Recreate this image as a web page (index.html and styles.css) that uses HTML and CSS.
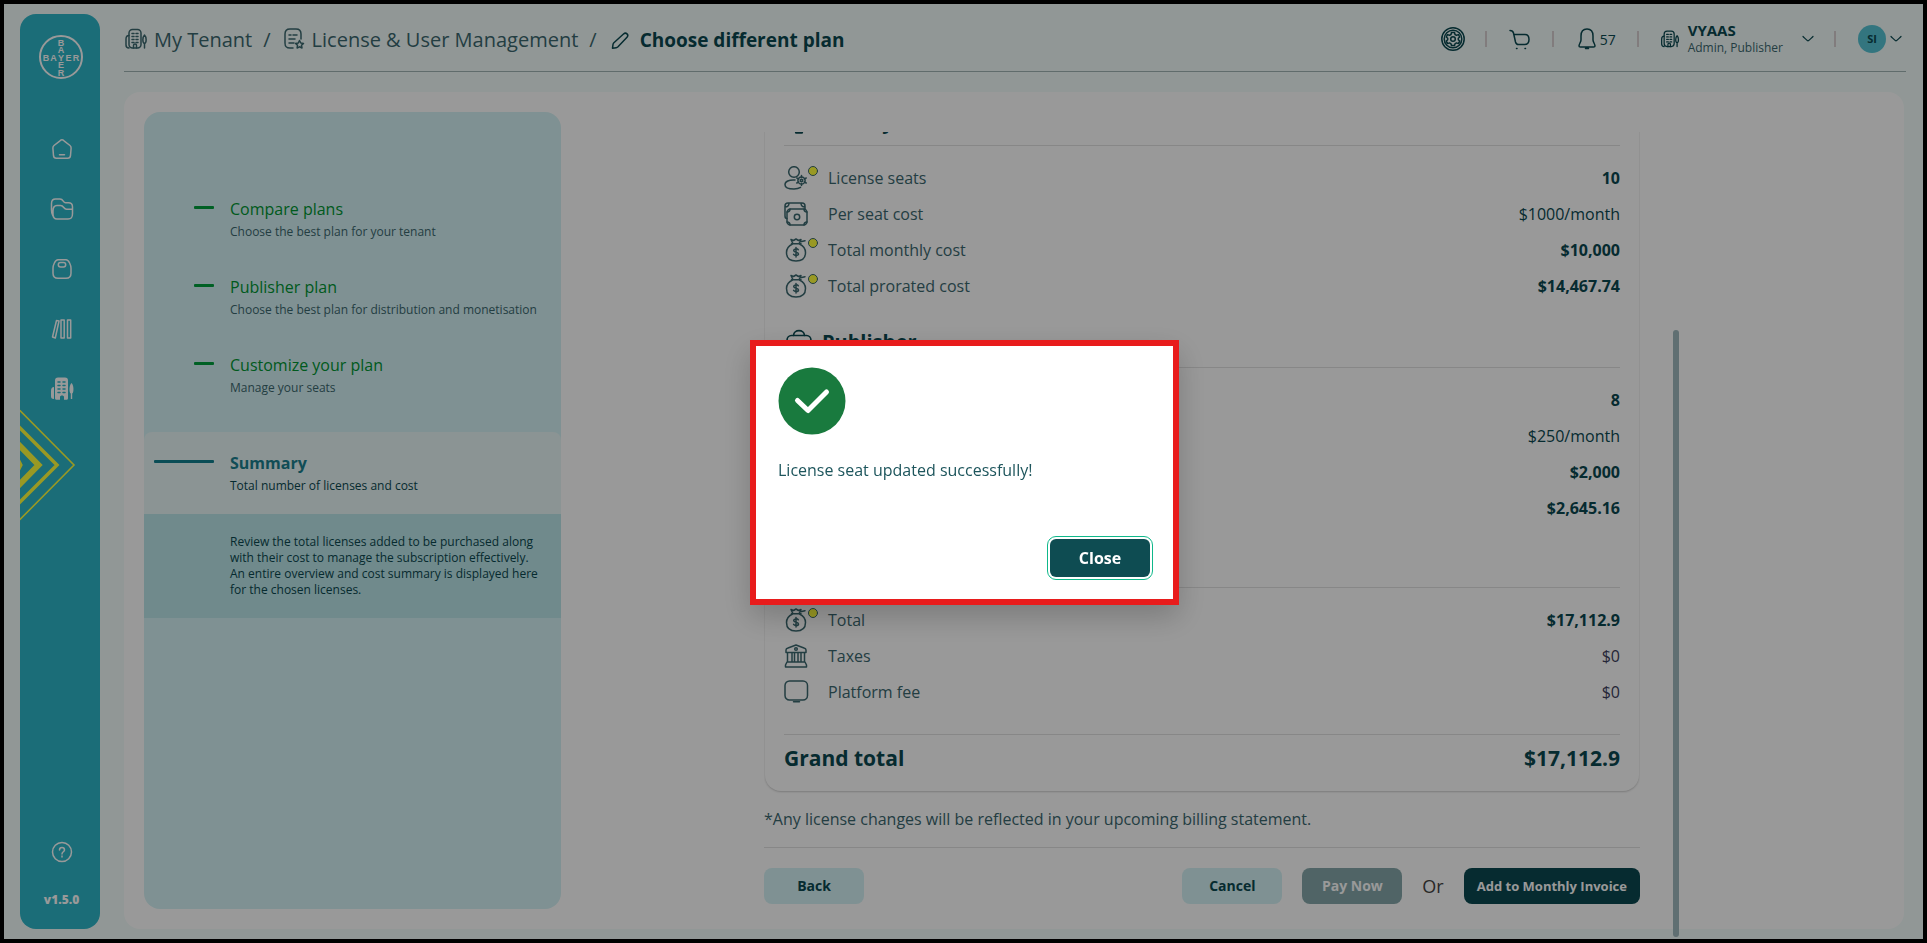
FILE: index.html
```html
<!DOCTYPE html>
<html lang="en">
<head>
<meta charset="utf-8">
<title>Choose different plan</title>
<link rel="stylesheet" href="styles.css">
</head>
<body>
<svg class="defs" aria-hidden="true">
  <symbol id="tenant" viewBox="0 0 24 24">
    <rect x="5" y="2.500" width="12" height="18.500" rx="3.500"/>
    <path d="M5 8.500c-2 0-3 1.500-3 3.500v6c0 2 1 3 3 3M9.500 21v-2.500c0-2 3-2 3 0V21"/>
    <path d="M8 6.500h2M12 6.500h2M8 9.500h2M12 9.500h2M8 12.500h2M12 12.500h2M8 15.500h2M12 15.500h2"/>
    <path d="M20.500 21v-4.500M20.500 8c-2.200 2-2.200 8 0 8.500 2.200-.5 2.200-6.500 0-8.500z"/>
  </symbol>
  <symbol id="bag" viewBox="0 0 34 24">
    <path d="M7.500 5.800h9.500M7 1.500l2 4.300M7 1.500l2.500 1 2.500-1.500 2.500 1.500 2.500-1-2 4.300M16.500 3.700l4.500-1M8.500 6C4.500 8 2.500 11 2.500 14.500c0 5.500 3.500 8.500 9.500 8.500s9.500-3 9.500-8.500c0-3.500-2-6.500-6-8.500"/>
    <path d="M14.300 11.800c-.8-1.400-4.600-1.300-4.600.8 0 2.200 4.800 1.100 4.800 3.300 0 2-4 2.100-4.900.5M12 9.500v9.500"/>
    <circle class="dot" cx="29" cy="5" r="4.500"/>
  </symbol>
  <symbol id="seat" viewBox="0 0 34 24">
    <circle cx="10" cy="6" r="5.300"/>
    <path d="M11 14C5 13.500 1 15.500 1 18.700 1 22 5 23 10 23c3 0 5-.6 6.500-1.600"/>
    <circle cx="17.500" cy="14.500" r="3.600"/><circle cx="17.500" cy="14.500" r="1.200"/>
    <path d="M17.500 9.500v2M17.500 17.500v2M12.800 12l2 1.200M20.200 15.800l2 1.200M12.800 17l2-1.200M20.200 13.200l2-1.200"/>
    <circle class="dot" cx="29" cy="5" r="4.500"/>
  </symbol>
  <symbol id="cash" viewBox="0 0 34 24">
    <path d="M3 16.500c-1.500 0-2-1-2-2.500V4c0-2 1-3 3-3h14c2 0 3 1 3 3v3M1 5c2.500 0 4-1.500 4-4M21 5c-2.500 0-4-1.500-4-4"/>
    <rect x="3" y="7" width="20" height="16" rx="3.500"/>
    <circle cx="13" cy="15" r="2.700"/>
    <path d="M3 10c1.800 0 3-1.200 3-3M23 10c-1.800 0-3-1.200-3-3M3 20c1.800 0 3 1.200 3 3M23 20c-1.800 0-3 1.200-3 3"/>
  </symbol>
  <symbol id="bank" viewBox="0 0 34 24">
    <path d="M2 8.500V6c0-1 .5-1.500 2-2l8-3 8 3c1.500.5 2 1 2 2v2.500zM3.500 8.500v9M8 8.500v9M10.500 8.500v9M14 8.500v9M17 8.500v9M20.500 8.500v9M3 18h18l1.500 3v2h-21v-2z"/>
    <circle cx="12" cy="5" r="1.300"/>
  </symbol>
  <symbol id="screen" viewBox="0 0 34 24">
    <rect x="1" y="1" width="22.500" height="19" rx="4.500"/><path d="M9.500 21.800h6"/>
  </symbol>
  <symbol id="case" viewBox="0 0 24 24">
    <rect x="1" y="6" width="22" height="16" rx="4"/><path d="M7 6c0-6 10-6 10 0M1 12h22"/>
  </symbol>
  <symbol id="badge" viewBox="0 0 24 24">
    <circle cx="12" cy="9" r="8"/><path d="M9 9l2 2 4-4M9 17v5h6v-5"/>
  </symbol>
  <symbol id="chev" viewBox="0 0 12 8"><path d="M1 1.500C4 4.500 5 5.800 6 5.800S8 4.500 11 1.500"/></symbol>
</svg>

<div class="app">
  <aside class="sidebar">
    <svg class="logo" viewBox="0 0 46 46" role="img" aria-label="Bayer">
      <circle cx="23" cy="23" r="21"/>
      <g class="logo-text">
        <text x="8" y="26.500">B</text><text x="15.500" y="26.500">A</text><text x="23" y="26.500">Y</text><text x="30.500" y="26.500">E</text><text x="38" y="26.500">R</text>
        <text x="23" y="11.500">B</text><text x="23" y="19">A</text><text x="23" y="34">E</text><text x="23" y="41.500">R</text>
      </g>
    </svg>
    <nav class="nav" aria-label="Main">
      <a href="#" aria-label="Home"><svg viewBox="0 0 24 24"><path d="M12 2.800c.8 0 1.500.5 2 1l6 4.700c1 .8 1.200 1.600 1.100 2.700l-.6 7.500c-.2 1.800-1 2.600-2.800 2.600H6.300c-1.800 0-2.600-.8-2.800-2.600l-.6-7.500c-.1-1.100.1-1.900 1.100-2.700l6-4.700c.5-.5 1.200-1 2-1zM9.500 17.800h5"/></svg></a>
      <a href="#" aria-label="Files"><svg viewBox="0 0 24 24"><path d="M2.800 18.500C1.800 17 1.500 15 1.500 13V6.500c0-3 1-4.500 4-4.500h4.500c3.500 0 3 3.800 5.500 3.800h3c3 0 4 1.500 4 4.200v6.500c0 4-1 5.500-4.500 5.500H7C4 22 3 20.500 3 17v-3c0-4 1-5.500 4-5.500h3.500c3.500 0 3 3.800 6 3.800h5.500"/></svg></a>
      <a href="#" aria-label="Store"><svg viewBox="0 0 24 24"><path d="M8 2.800h8c3 0 5 5.700 5 8.500v5c0 3.500-1.500 5-5 5H8c-3.500 0-5-1.500-5-5v-5c0-2.800 2-8.500 5-8.500z"/><rect x="8.300" y="5.500" width="7.400" height="4.500" rx="2.200"/></svg></a>
      <a href="#" aria-label="Library"><svg viewBox="0 0 24 24"><path d="M6.500 3.500L2.500 20l2.800 1L9 4zM11 3h3.200v18H11zM17.500 3h3.200v18h-3.200z"/></svg></a>
      <a href="#" aria-label="My Tenant"><svg viewBox="0 0 24 24"><path class="solid" d="M4 10v12c-2.500 0-3-1-3-3v-5c0-2.500 1-4 3-4zM8 .5h7c2 0 3 1 3 3V21c0 1-.5 1.800-1.500 1.800H14V20c0-2-4-2-4 0v2.800H6.500C5.500 22.800 5 22 5 21V3.500c0-2 1-3 3-3zM21.500 6c-2.500 2-2.500 10-.7 10.500V22h1.400v-5.500C24 16 24 8 21.500 6z"/><path class="windows" d="M8 5h2M13 5h2M8 8.500h2M13 8.500h2M8 12h2M13 12h2M8 15.500h2M13 15.500h2"/></svg></a>
    </nav>
    <svg class="arrows" viewBox="0 0 56 112" aria-hidden="true">
      <path d="M0 1.500L54 56 0 110.500" stroke-width="1.600"/><path d="M-2 17L37 56-2 95" stroke-width="3.500"/><path d="M-2 35L18.500 56-2 77" stroke-width="6"/><path d="M-4 48L0 56l-4 8" stroke-width="5"/>
    </svg>
    <div class="side-foot">
      <a href="#" aria-label="Help"><svg viewBox="0 0 24 24"><circle cx="12" cy="12" r="9.500"/><path d="M9.500 10c0-3.300 5-3.300 5 0 0 1.800-2.500 1.800-2.500 4M12 16v1"/></svg></a>
      <span class="version">v1.5.0</span>
    </div>
  </aside>

  <div class="page">
    <header class="header">
      <nav class="crumbs" aria-label="Breadcrumb">
        <a href="#"><svg><use href="#tenant"/></svg>My Tenant</a>
        <span>/</span>
        <a href="#"><svg viewBox="0 0 24 24"><path d="M11 21H8c-4 0-5-1.500-5-5V7c0-3.500 1.500-5 5-5h6c3.500 0 5 1.500 5 5v5M7 8h2M7 12h6M7 16h5M11 8h4"/><path d="M17.500 13.500l1.300 2.500 2.700.4-2 1.900.5 2.700-2.500-1.200-2.400 1.200.4-2.700-1.900-1.900 2.700-.4z"/></svg>License &amp; User Management</a>
        <span>/</span>
        <h1><svg viewBox="0 0 24 24"><path d="M4.500 20.200l.5-3.700c.1-.7.300-1.100.9-1.700L15.500 6c2.500-2.200 5.700.7 3.500 3.200L10 18.800c-.6.600-1 .9-1.800 1z"/></svg>Choose different plan</h1>
      </nav>
      <div class="tools">
        <button class="icon-btn" aria-label="Settings"><svg viewBox="0 0 24 24"><circle cx="12" cy="12" r="11.200"/><circle cx="12" cy="12" r="8.800"/><circle cx="12" cy="12" r="2.300"/><path d="M10.500 5.500h3l.5 2 1.500.8 2-.7 1.200 2.400-1.400 1.300v1.500l1.400 1.300-1.200 2.500-2-.7-1.500.9-.5 1.800h-3l-.5-1.800-1.500-.9-2 .7-1.200-2.500 1.400-1.300v-1.500L5.300 10l1.200-2.400 2 .7 1.500-.8z"/></svg></button>
        <i class="sep"></i>
        <button class="icon-btn" aria-label="Cart"><svg viewBox="0 0 24 24"><path d="M2 3.500c2 0 3 .5 3.500 2.500l2 9c.5 2 1.500 2.500 3 2.500h6c3 0 4.500-2 4.500-5s-1-5-4-5H6M8.500 21.500h.5M17 21.500h.5"/></svg></button>
        <i class="sep"></i>
        <button class="icon-btn bell" aria-label="57 notifications"><svg viewBox="0 0 24 24"><path d="M12 2C8 2 6 5 6 9v4c0 2-2 4-2 6 0 1 .5 1 1.500 1h13c1 0 1.500 0 1.500-1 0-2-2-4-2-6V9c0-4-2-7-6-7zM10.500 21.500h3"/></svg>57</button>
        <i class="sep"></i>
        <button class="tenant-btn"><svg class="t-ico"><use href="#tenant"/></svg><span><b>VYAAS</b><small>Admin, Publisher</small></span><svg class="chev"><use href="#chev"/></svg></button>
        <i class="sep"></i>
        <button class="user-btn" aria-label="Account SI"><span class="avatar">SI</span><svg class="chev"><use href="#chev"/></svg></button>
      </div>
    </header>

    <main class="card">
      <ol class="steps">
        <li><h2>Compare plans</h2><p>Choose the best plan for your tenant</p></li>
        <li><h2>Publisher plan</h2><p>Choose the best plan for distribution and monetisation</p></li>
        <li><h2>Customize your plan</h2><p>Manage your seats</p></li>
        <li class="current"><h2>Summary</h2><p>Total number of licenses and cost</p></li>
        <li class="about">Review the total licenses added to be purchased along with their cost to manage the subscription effectively. An entire overview and cost summary is displayed here for the chosen licenses.</li>
      </ol>
      <div class="content">
        <div class="scroll">
          <section class="bill">
            <h3 class="first"><svg><use href="#badge"/></svg>Library</h3>
            <dl>
              <div><dt><svg><use href="#seat"/></svg>License seats</dt><dd><b>10</b></dd></div>
              <div><dt><svg><use href="#cash"/></svg>Per seat cost</dt><dd>$1000/month</dd></div>
              <div><dt><svg><use href="#bag"/></svg>Total monthly cost</dt><dd><b>$10,000</b></dd></div>
              <div><dt><svg><use href="#bag"/></svg>Total prorated cost</dt><dd><b>$14,467.74</b></dd></div>
            </dl>
            <h3><svg><use href="#case"/></svg>Publisher</h3>
            <dl>
              <div><dt><svg><use href="#seat"/></svg>License seats</dt><dd><b>8</b></dd></div>
              <div><dt><svg><use href="#cash"/></svg>Per seat cost</dt><dd>$250/month</dd></div>
              <div><dt><svg><use href="#bag"/></svg>Total monthly cost</dt><dd><b>$2,000</b></dd></div>
              <div><dt><svg><use href="#bag"/></svg>Total prorated cost</dt><dd><b>$2,645.16</b></dd></div>
            </dl>
            <h3 class="sum">Total</h3>
            <dl>
              <div><dt><svg><use href="#bag"/></svg>Total</dt><dd><b>$17,112.9</b></dd></div>
              <div><dt><svg><use href="#bank"/></svg>Taxes</dt><dd class="zero">$0</dd></div>
              <div><dt><svg><use href="#screen"/></svg>Platform fee</dt><dd class="zero">$0</dd></div>
            </dl>
            <div class="grand"><span>Grand total</span><span>$17,112.9</span></div>
          </section>
          <p class="note">*Any license changes will be reflected in your upcoming billing statement.</p>
          <div class="actions">
            <button class="btn light">Back</button>
            <button class="btn light push">Cancel</button>
            <button class="btn muted">Pay Now</button>
            <span>Or</span>
            <button class="btn dark">Add to Monthly Invoice</button>
          </div>
        </div>
        <div class="track"></div>
      </div>
    </main>
  </div>
</div>

<div class="scrim">
  <div class="dialog" role="dialog" aria-modal="true" aria-labelledby="msg">
    <svg viewBox="0 0 68 68" aria-hidden="true"><circle cx="34" cy="34" r="33.500"/><path d="M19.500 33.500l10.500 10 18.500-18.500"/></svg>
    <p id="msg">License seat updated successfully!</p>
    <button class="close">Close</button>
  </div>
</div>
</body>
</html>
```
FILE: styles.css
```css
* { box-sizing: border-box; }
body, h1, h2, h3, p, ol, dl, dd { margin: 0; padding: 0; }
body {
  font-family: "Open Sans", "Noto Sans", sans-serif;
  font-size: 16px;
  color: #3b686f;
}
button { font: inherit; color: inherit; border: 0; background: none; padding: 0; cursor: pointer; }
a { color: inherit; text-decoration: none; }
svg { fill: none; stroke: currentColor; stroke-width: 1.5; stroke-linecap: round; stroke-linejoin: round; flex: none; }
.defs { position: absolute; width: 0; height: 0; }

.app {
  display: flex;
  gap: 24px;
  height: 100vh;
  min-height: 720px;
  padding: 10px 19px 10px 16px;
  border: 4px solid #000;
  background: #f2fcfa;
  overflow: hidden;
}

/* Sidebar */
.sidebar {
  position: relative;
  display: flex;
  flex-direction: column;
  align-items: center;
  flex: 0 0 80px;
  padding: 20px 0 20px 3px;
  border-radius: 16px;
  background: #2db6c8;
  color: #fff;
}
.logo { width: 46px; height: 46px; margin-right: 2px; stroke-width: 2; }
.logo-text { fill: #fff; stroke: none; font: bold 9px "Liberation Sans", sans-serif; text-anchor: middle; }
.nav { display: flex; flex-direction: column; gap: 36px; margin-top: 57px; }
.nav a, .side-foot a { display: block; height: 24px; }
.nav svg, .side-foot svg { width: 24px; height: 24px; stroke-width: 1.5; }
.solid { fill: #fff; stroke: none; }
.windows { stroke: #2db6c8; }
.arrows { position: absolute; left: 0; top: 395px; width: 56px; height: 112px; stroke: #ffff3c; stroke-linejoin: miter; overflow: hidden; }
.side-foot { display: flex; flex-direction: column; align-items: center; gap: 27px; margin-top: auto; }
.version { font-size: 12px; line-height: 18px; font-weight: 800; }

/* Header */
.page { flex: 1; min-width: 0; display: flex; flex-direction: column; }
.header {
  display: flex;
  justify-content: space-between;
  height: 58px;
  margin-right: -2px;
  border-bottom: 1px solid #a0b4b4;
}
.crumbs { display: flex; align-items: center; gap: 11px; height: 50px; font-size: 20px; }
.crumbs a, .crumbs h1 { display: flex; align-items: center; gap: 6px; }
.crumbs h1 { padding-top: 2px; font-size: 19px; color: #0a4850; gap: 8px; }
.crumbs svg { width: 24px; height: 24px; }
.tools { display: flex; align-items: center; height: 50px; color: #0a4850; }
.tools svg { width: 24px; height: 24px; }
.icon-btn { display: flex; align-items: center; }
.bell { gap: 1px; font-size: 14px; }
.sep { width: 2px; height: 16px; margin: 0 20px; background: #d8cfd0; }
.icon-btn + .sep { margin: 0 21px 0 20px; }
.bell + .sep { margin: 0 21px; }
.tenant-btn { display: flex; align-items: center; text-align: left; }
.tenant-btn span { margin: 0 19px 0 8px; }
.tenant-btn b, .tenant-btn small { display: block; line-height: 18px; }
.tenant-btn b { font-size: 15px; }
.tenant-btn small { font-size: 12px; color: #3b686f; }
.tools .t-ico { width: 20px; height: 20px; }
.tools .chev { width: 12px; height: 8px; stroke-width: 1.2; }
.user-btn { display: flex; align-items: center; gap: 4px; margin-right: 4px; padding-left: 2px; }
.avatar { width: 28px; height: 28px; border-radius: 50%; background: #55c4d4; font-size: 11px; line-height: 28px; font-weight: 700; }

/* Card */
.card { flex: 1; min-height: 0; display: flex; margin-top: 20px; padding: 20px; border-radius: 16px; background: #fff; }
.steps { flex: 0 0 417px; padding-top: 85px; border-radius: 16px; background: #d4f2f5; list-style: none; overflow: hidden; }
.steps li { position: relative; height: 78px; padding-left: 86px; }
.steps h2 { font-size: 16px; line-height: 24px; font-weight: 400; color: #009632; }
.steps p { font-size: 12px; line-height: 22px; }
.steps li:not(.about)::before { content: ""; position: absolute; left: 50px; top: 9px; width: 20px; height: 3px; border-radius: 1px; background: #00a03c; }
.steps .current { height: 82px; margin-top: 1px; padding-top: 19px; border-radius: 8px 8px 0 0; background: #e8f7f7; }
.steps .current h2 { font-weight: 700; color: #1c8090; }
.steps .current p, .steps .about { color: #0a4850; }
.steps .current:not(.about)::before { left: 10px; top: 28px; width: 60px; background: #128090; }
.steps .about { height: auto; padding: 20px 20px 20px 86px; font-size: 12px; line-height: 16px; background: #bbe6e9; }

.content { flex: 1; display: flex; justify-content: center; gap: 33px; min-width: 0; margin-bottom: -20px; padding: 20px 2px 0 0; }
.scroll { flex: 0 1 876px; display: flex; flex-direction: column; justify-content: flex-end; min-height: 0; overflow: hidden; padding-bottom: 25px; }
.track { flex: 0 0 6px; margin: 198px 0 -8px; border-radius: 3px; background: #a0b9be; }
.bill { padding: 0 19px; border-radius: 0 0 16px 16px; box-shadow: 0 1px 2px rgba(0, 0, 0, .2); margin: 0 1px; }
.bill h3 { display: flex; align-items: center; gap: 10px; height: 64px; padding: 12px 0 0 2px; border-bottom: 1px solid #e2e2e2; font-size: 20px; line-height: 24px; color: #0a4850; }
.bill .first { padding-top: 16px; }
.bill .sum { height: 62px; }
.bill h3 svg { width: 26px; height: 26px; }
.bill dl { padding: 14px 0 0; }
.bill dl div { display: flex; justify-content: space-between; align-items: center; height: 36px; }
.bill dt { display: flex; align-items: center; gap: 10px; }
.bill dt svg { width: 34px; height: 24px; }
.bill dd { color: #0a4850; }
.bill .zero { color: #3c405c; }
.dot { fill: #ffff3c; stroke-width: 1; }
.grand { display: flex; justify-content: space-between; height: 57px; margin-top: 24px; padding-top: 8px; border-top: 1px solid #e2e2e2; font-size: 21px; line-height: 30px; font-weight: 700; color: #0a4850; }
.note { padding: 16px 0; line-height: 24px; border-bottom: 1px solid #e2e2e2; }
.actions { display: flex; align-items: center; gap: 20px; margin-top: 20px; font-size: 18px; line-height: 24px; color: #444; }
.btn { min-width: 100px; height: 36px; padding: 0 12px; border-radius: 8px; font-size: 14px; font-weight: 700; }
.push { margin-left: auto; }
.light { background: #d4f2f5; color: #0a4850; }
.muted { background: #85a7aa; color: #fff; }
.dark { padding: 0 13px; background: #0a4850; color: #fff; font-size: 13px; }

/* Dialog */
.scrim { position: fixed; inset: 0; display: flex; align-items: center; justify-content: center; padding: 2px 0 0 2px; background: rgba(0, 0, 0, .4); }
.dialog {
  display: flex;
  flex-direction: column;
  width: 429px;
  padding: 21px 20px 22px 22px;
  border: 6px solid #e81c1c;
  background: #fff;
  color: #1d555c;
  box-shadow: 0 12px 28px rgba(0, 0, 0, .2);
}
.dialog svg { width: 68px; height: 68px; stroke: none; }
.dialog circle { fill: #197a3e; }
.dialog path { stroke: #fff; stroke-width: 5; }
.dialog p { margin: 23px 0 57px; line-height: 24px; }
.close { align-self: flex-end; width: 100px; height: 38px; margin-right: 3px; border-radius: 6px; background: #0e4c52; color: #fff; font-weight: 700; outline: 1px solid #0eb88a; outline-offset: 2px; }
```
